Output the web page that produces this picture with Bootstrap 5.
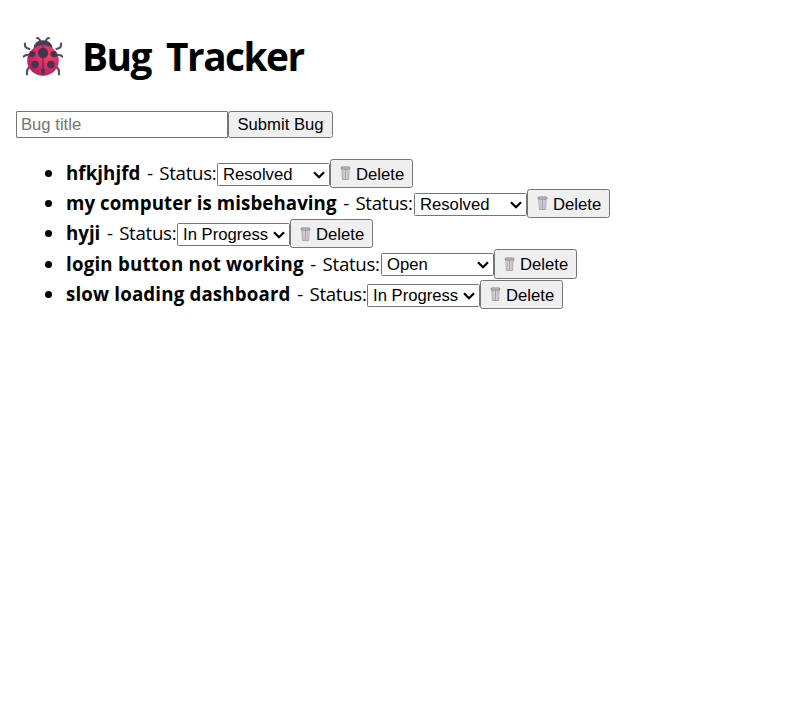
<!DOCTYPE html>
<html lang="en">
<head>
<meta charset="utf-8">
<meta name="viewport" content="width=device-width, initial-scale=1">
<title>Bug Tracker</title>
<link href="https://cdn.jsdelivr.net/npm/bootstrap@5.3.0/dist/css/bootstrap.min.css" rel="stylesheet">
<style>
body{font-family:"Segoe UI","Open Sans","Noto Sans",sans-serif;font-size:18.7px;line-height:30px;color:#000;background:#fff}
.page{padding:32px 16px 0}
.title{font-size:38.8px;line-height:48px;height:50px;font-weight:700;color:#000}
.title-text{letter-spacing:-1.5px;word-spacing:6.5px}
.ladybug{width:44px;height:42px;margin:4px 15.600px 0 6.400px;flex:none}
.bug-form{margin-top:29px;height:27px}
.bug-input,.tool-btn,.status{font-family:"Liberation Sans",Arial,sans-serif;font-size:16.67px;line-height:19px;border:1px solid #767676;color:#000}
.bug-input{width:212px;height:27px;padding:1px 4px;background:#fff;border-radius:1px}
.bug-input::placeholder{color:#757575;opacity:1}
.tool-btn{background:#efefef;border-radius:2.500px;padding:0 8px;white-space:nowrap}
.submit{width:105px;height:27px}
.bugs{margin-top:20.9px}
.bug{height:30.2px;padding-left:50px;position:relative}
.bug::before{content:"";position:absolute;left:29px;top:11.2px;width:7px;height:7px;border-radius:50%;background:#000}
.text{white-space:pre;height:30px;line-height:30px;margin-top:-.9px;flex:none}
.st{letter-spacing:-.3px;word-spacing:2px}
.w1{width:151px}.w2{width:348px}.w3{width:111px}.w4{width:315px}.w5{width:301px}
.n1,.n2{letter-spacing:.07px}.n4{letter-spacing:.21px}.n5{letter-spacing:.17px}
.status{width:113px;height:23px;margin-top:4px;padding:0 5px;border-radius:1.500px;appearance:none;-webkit-appearance:none;background:#fff url("data:image/svg+xml,%3Csvg xmlns='http://www.w3.org/2000/svg' viewBox='0 0 12 8'%3E%3Cpath d='M1 1.200 6 6.200 11 1.200' fill='none' stroke='%23000' stroke-width='2.200'/%3E%3C/svg%3E") no-repeat 95px 7px/12px 8px}
.del{width:83.400px;height:29.200px;padding:1.600px 0 0 9px}
.bin{width:12px;height:14px;margin:-2px 4px 0 0;flex:none}
</style>
</head>
<body>
<main class="page">
<h1 class="title d-flex m-0">
<svg class="ladybug" viewBox="0 0 44 42" aria-hidden="true">
<defs>
<radialGradient id="shell" cx=".65" cy=".3" r=".75"><stop offset="0" stop-color="#ee456d"/><stop offset=".55" stop-color="#d92d63"/><stop offset="1" stop-color="#ad2460"/></radialGradient>
<linearGradient id="dark" x2="0" y2="1"><stop stop-color="#42354f"/><stop offset="1" stop-color="#51314f"/></linearGradient>
</defs>
<g fill="none" stroke="#5b5166" stroke-width="2.200" stroke-linecap="round" stroke-linejoin="round">
<path d="M15 2q2.500 0 3.500 4M27 2q-2.500 0-3.500 4M3 7.500v2q0 2.200 4.500 3.500M39 7.500v2q0 2.200-4.500 3.500M1.800 20.500q1-1.600 5.200-1.600M40.200 20.500q-1-1.600-5.200-1.600M5 38.500v-3q0-3 3.500-5M37 38.500v-3q0-3-3.500-5"/>
</g>
<path d="M11.500 12q1-7.500 9.500-7.700 8.500.2 9.500 7.700z" fill="#493d58"/>
<ellipse cx="21" cy="24.500" rx="15.800" ry="15.300" fill="url(#shell)"/>
<g fill="url(#dark)"><circle cx="21" cy="17" r="5.200"/><circle cx="13" cy="28.600" r="3.800"/><circle cx="29" cy="28.600" r="3.800"/><path d="M8 15.500q5-1.500 5.800 2.200-.7 4-4.800 3.500-2.400-.5-2.700-2.300zM34 15.500q-5-1.500-5.800 2.200.7 4 4.800 3.500 2.400-.5 2.700-2.300z"/><ellipse cx="21" cy="35" rx="2" ry="2.700"/></g>
<path d="M21 10v29.500" stroke="#51314f" stroke-width="1.200"/>
</svg><span class="title-text">Bug Tracker</span></h1>
<form class="bug-form d-flex" onsubmit="return false">
<input class="bug-input" placeholder="Bug title" aria-label="Bug title"><button class="tool-btn submit">Submit Bug</button>
</form>
<svg width="0" height="0" class="d-none"><symbol id="bin" viewBox="0 0 12 14"><path d="M1.900 2.500h7.200l-.5 11H2.400z" fill="#dedee2" stroke="#a0a0a6" stroke-width=".9"/><path d="M3.900 3.500v9.500" stroke="#d8aaa0"/><path d="M5.500 3.500v9.500" stroke="#86a8dc"/><path d="M7.100 3.500v9.500" stroke="#c0aacf"/><rect x="1" y="1" width="9" height="2" rx="1" fill="#d8d8da" stroke="#77777b" stroke-width=".9"/></symbol></svg>
<ul class="bugs list-unstyled mb-0">
<li class="bug d-flex"><span class="text w1"><strong class="n1">hfkjhjfd</strong><span class="st"> - Status:</span></span><select class="status" aria-label="Status"><option>Resolved</option></select><button class="tool-btn del d-flex align-items-center"><svg class="bin"><use href="#bin"/></svg>Delete</button></li>
<li class="bug d-flex"><span class="text w2"><strong class="n2">my computer is misbehaving</strong><span class="st"> - Status:</span></span><select class="status" aria-label="Status"><option>Resolved</option></select><button class="tool-btn del d-flex align-items-center"><svg class="bin"><use href="#bin"/></svg>Delete</button></li>
<li class="bug d-flex"><span class="text w3"><strong class="n3">hyji</strong><span class="st"> - Status:</span></span><select class="status" aria-label="Status"><option>In Progress</option></select><button class="tool-btn del d-flex align-items-center"><svg class="bin"><use href="#bin"/></svg>Delete</button></li>
<li class="bug d-flex"><span class="text w4"><strong class="n4">login button not working</strong><span class="st"> - Status:</span></span><select class="status" aria-label="Status"><option>Open</option></select><button class="tool-btn del d-flex align-items-center"><svg class="bin"><use href="#bin"/></svg>Delete</button></li>
<li class="bug d-flex"><span class="text w5"><strong class="n5">slow loading dashboard</strong><span class="st"> - Status:</span></span><select class="status" aria-label="Status"><option>In Progress</option></select><button class="tool-btn del d-flex align-items-center"><svg class="bin"><use href="#bin"/></svg>Delete</button></li>
</ul>
</main>
<script src="https://cdn.jsdelivr.net/npm/bootstrap@5.3.0/dist/js/bootstrap.bundle.min.js"></script>
</body>
</html>
